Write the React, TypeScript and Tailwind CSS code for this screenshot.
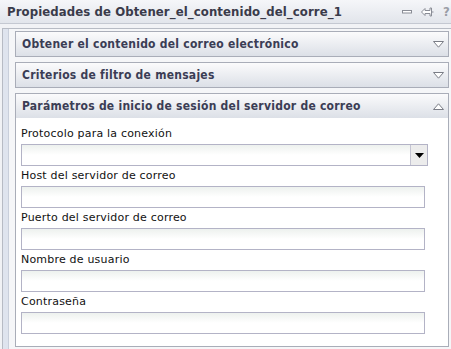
import React from 'react';

const FIELDS = [
  { label: 'Protocolo para la conexión', select: true },
  { label: 'Host del servidor de correo' },
  { label: 'Puerto del servidor de correo' },
  { label: 'Nombre de usuario' },
  { label: 'Contraseña' },
];

function Tri({ up }: { up?: boolean }) {
  return (
    <svg width="11" height="7" viewBox="0 0 11 7" className="shrink-0">
      {up ? (
        <path d="M0.5 6.5 L5.5 0.8 L10.5 6.5 Z" fill="#fff" stroke="#7a7d86" strokeWidth="1" />
      ) : (
        <path d="M0.5 0.5 L10.5 0.5 L5.5 6.2 Z" fill="#fff" stroke="#7a7d86" strokeWidth="1" />
      )}
    </svg>
  );
}

function Header({ title, open }: { title: string; open?: boolean }) {
  return (
    <div className="h-[24px] flex items-center justify-between pl-[6px] pr-[4px] bg-gradient-to-b from-[#fbfbfc] to-[#dce0e7]">
      <span className="text-[12px] font-bold text-[#3b3d55] tracking-[0.25px]">{title}</span>
      <Tri up={open} />
    </div>
  );
}

export default function App() {
  return (
    <div className="w-[451px] h-[349px] bg-white flex flex-col overflow-hidden font-['DejaVu_Sans_Condensed','DejaVu_Sans',sans-serif] [font-stretch:condensed]">
      {/* title bar */}
      <div className="h-[24px] shrink-0 flex items-center justify-between pl-[7px] bg-gradient-to-b from-[#f5f6f9] to-[#e2e5eb] border-b border-[#c4c8d1]">
        <span className="text-[13px] font-bold text-[#3a3b4a] tracking-[0.1px]">Propiedades de Obtener_el_contenido_del_corre_1</span>
        <div className="flex items-center gap-[9px] text-[#8a8d96]">
          <svg width="10" height="4" viewBox="0 0 10 4"><rect x="0.5" y="0.5" width="9" height="2.5" fill="#fff" stroke="#8a8d96" /></svg>
          <svg width="13" height="10" viewBox="0 0 13 10">
            <path d="M0.5 5 L4 1.5 L4 3.5 L9 3.5 L9 1 L10.5 1 L10.5 9 L9 9 L9 6.5 L4 6.5 L4 8.5 Z M10.5 5 L12.5 5" fill="#fff" stroke="#8a8d96" strokeWidth="1" strokeLinejoin="round" />
          </svg>
          <span className="text-[13px] font-bold text-[#9a9da6] w-[8px] overflow-hidden leading-none">?</span>
        </div>
      </div>

      {/* body */}
      <div className="flex-1 flex bg-[#f1f2f5] pl-[2px] pt-[4px]">
        <div className="flex-1 flex border-l border-t border-[#b7bbc4] bg-[#e4e8f0]">
          <div className="w-[6px] shrink-0 border-r border-[#c9cfdb] bg-[#dfe4ee]" />
          <div className="flex-1 bg-[#f5f6f8] pt-[2px] pl-[6px] pr-[2px] flex flex-col gap-[5px]">
            <div className="border border-[#a9adb8]">
              <Header title="Obtener el contenido del correo electrónico" />
            </div>
            <div className="border border-[#a9adb8]">
              <Header title="Criterios de filtro de mensajes" />
            </div>
            <div className="border border-[#a9adb8] bg-white">
              <Header title="Parámetros de inicio de sesión del servidor de correo" open />
              <div className="pt-[6px] pb-[12px] pl-[5px] text-[11px] text-[#111] font-['DejaVu_Sans',sans-serif] [font-stretch:normal] tracking-[0.2px]">
                {FIELDS.map((f) => (
                  <div key={f.label}>
                    <div className="h-[20px] leading-[20px]">{f.label}</div>
                    {f.select ? (
                      <div className="w-[407px] h-[22px] flex border border-[#b3b3c6] bg-gradient-to-b from-[#edf1ee] via-white to-white">
                        <div className="flex-1" />
                        <div className="w-[17px] border-l border-[#c4c4d2] bg-[#ececec] flex items-center justify-center">
                          <svg width="9" height="5" viewBox="0 0 9 5"><path d="M0 0 L9 0 L4.5 5 Z" fill="#000" /></svg>
                        </div>
                      </div>
                    ) : (
                      <div className="w-[404px] h-[22px] border border-[#b3b3c6] bg-gradient-to-b from-[#edf1ee] via-white to-white" />
                    )}
                  </div>
                ))}
              </div>
            </div>
          </div>
        </div>
      </div>
    </div>
  );
}
